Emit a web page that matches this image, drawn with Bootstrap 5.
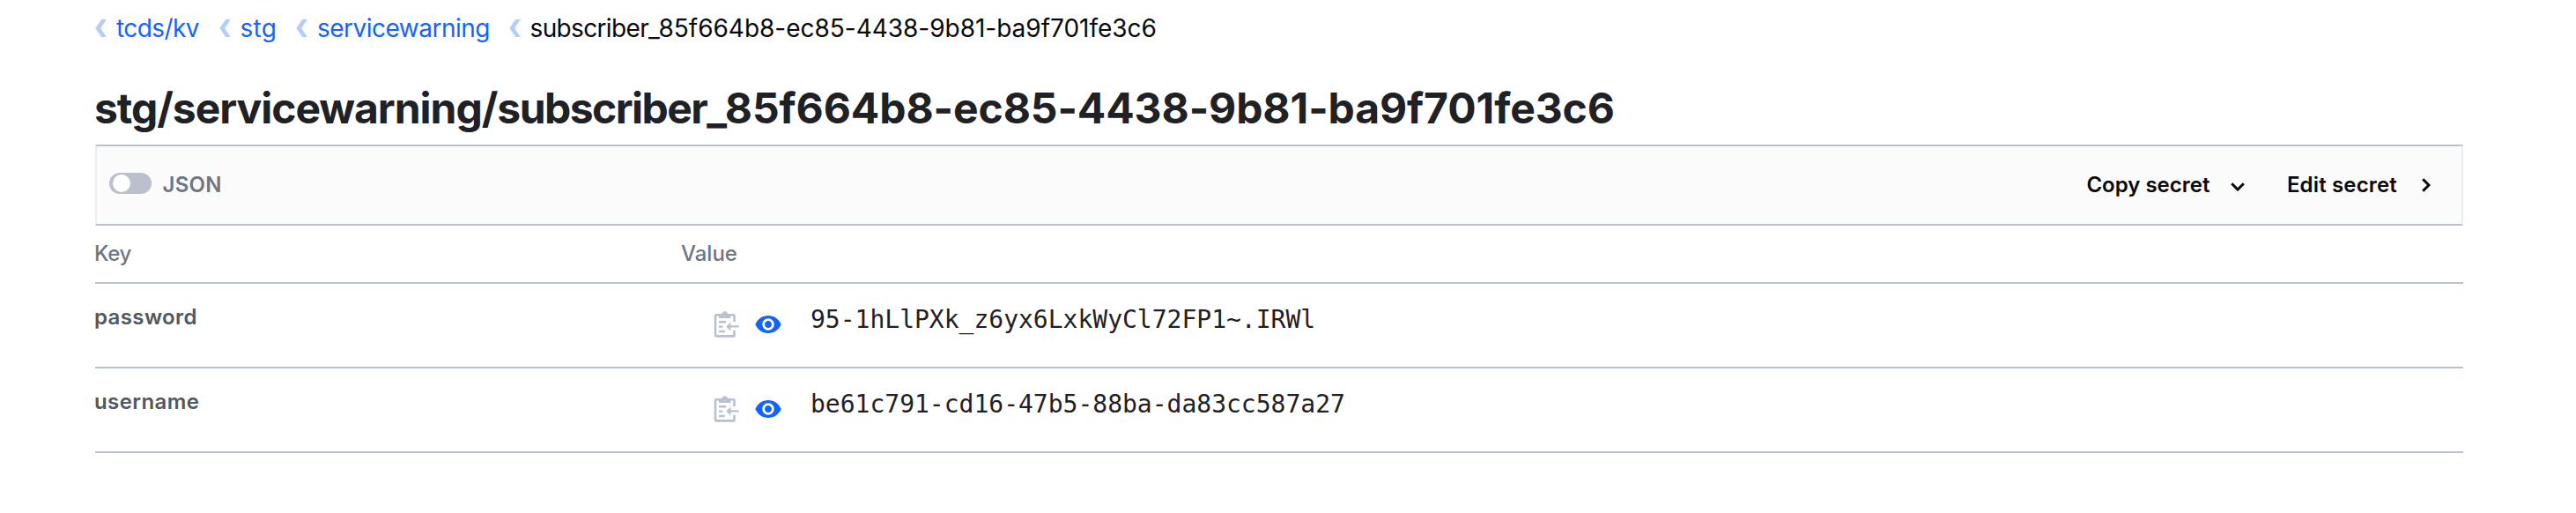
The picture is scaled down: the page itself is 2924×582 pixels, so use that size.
<!DOCTYPE html>
<html lang="en">
<head>
<meta charset="utf-8">
<title>stg/servicewarning secret</title>
<link rel="stylesheet" href="https://cdn.jsdelivr.net/npm/bootstrap@5.3.0/dist/css/bootstrap.min.css">
<style>
body{font-family:Inter,"Liberation Sans",sans-serif;background:#fff;color:#1f2124}
.page{padding:14px 128px 0 107px}
.crumbs{font-size:28px;line-height:36px;height:36px;color:#0a0a0a}
.crumbs a{color:#1563ff;text-decoration:none}
.crumbs svg{margin-right:11px;margin-left:1px;margin-top:-1px}
.crumbs li{display:flex;align-items:center;white-space:nowrap}
.c1{width:140.500px;letter-spacing:-.6px}
.c2{width:87.5px;letter-spacing:.3px}
.c3{width:241.5px;letter-spacing:-.51px}
.c4 .name{letter-spacing:-.65px}
.c4 .ident{letter-spacing:-.02px}
h1{font-size:48px;font-weight:700;line-height:60px;margin:43px 0 11px 0;color:#1f2124;white-space:nowrap}
h1 .dir{letter-spacing:-1.030px}
h1 .name{letter-spacing:-1.560px}
h1 .ident{letter-spacing:-.07px}
.toolbar{margin-left:1px;height:92px;background:#fbfbfb;border:2px solid #bac1cc;border-left-color:#ebeff4;border-right-color:#ebeff4;font-size:24px;line-height:36px}
.toggle{width:48px;height:24px;border-radius:12px;background:#bac1cc;padding:2px 4px;margin:-4px 12.500px 0 14px}
.toggle span{display:block;width:20px;height:20px;border-radius:50%;background:#fff}
.lbl{color:#6f7682;font-weight:600;letter-spacing:.3px}
.act{color:#0a0a0a;font-weight:600}
.line{margin-left:1px;border-bottom:2px solid #bac1cc}
.head{height:66px;font-size:24px;font-weight:500;color:#6f7682}
.keycol{width:665px;flex:none;font-size:24px;line-height:36px}
.keycol span{margin-left:-1px}
.item{height:96px}
.item .keycol{font-weight:600;color:#525761;padding-top:20px}
.val{font-family:"DejaVu Sans Mono",monospace;font-size:28px;line-height:40px;margin:21px 0 0 32px;color:#1f2124}
</style>
</head>
<body>
<svg width="0" height="0" class="position-absolute">
<symbol id="back" viewBox="0 0 13 20"><path d="M7.200 0h5.600L6.100 10l6.700 10H7.200L.4 10z" fill="#b3cdff"/></symbol>
<symbol id="clip" viewBox="0 0 32 32"><g fill="none" stroke="#bac1cc" stroke-width="2.6"><path d="M25.5 13V6.5Q25.5 5.3 24.3 5.3H5.2Q4 5.3 4 6.5V28.2Q4 29.4 5.2 29.4H24.3Q25.5 29.4 25.5 28.2V23"/><path d="M8 13.2h8M8 18.6h4.5M8 24h6.7M19.5 18.4h11.2" stroke-width="2.4"/></g><path d="M16.3 18.4l5.2-5v10z" fill="#bac1cc"/><path fill-rule="evenodd" d="M8 4.5h3.2C11.6 2.600 12.800 1.300 14.700 1.300S17.800 2.600 18.200 4.500H21.300V9H8zM14.700 3.800a1.500 1.500 0 1 0 0 3 1.500 1.500 0 1 0 0-3z" fill="#bac1cc"/></symbol>
<symbol id="eye" viewBox="0 0 24 24"><path fill="#1563ff" d="M12 4.500C7 4.500 2.730 7.610 1 12c1.730 4.390 6 7.500 11 7.500s9.270-3.110 11-7.500c-1.730-4.390-6-7.500-11-7.500zM12 17c-2.760 0-5-2.240-5-5s2.240-5 5-5 5 2.240 5 5-2.240 5-5 5zm0-8c-1.660 0-3 1.340-3 3s1.340 3 3 3 3-1.340 3-3-1.340-3-3-3z"/></symbol>
</svg>
<main class="page">
<nav>
<ul class="crumbs list-unstyled d-flex m-0">
<li class="c1"><svg width="13" height="20"><use href="#back"/></svg><a href="#">tcds/kv</a></li>
<li class="c2"><svg width="13" height="20"><use href="#back"/></svg><a href="#">stg</a></li>
<li class="c3"><svg width="13" height="20"><use href="#back"/></svg><a href="#">servicewarning</a></li>
<li class="c4"><svg width="13" height="20"><use href="#back"/></svg><span><span class="name">subscriber</span><span class="ident">_85f664b8-ec85-4438-9b81-ba9f701fe3c6</span></span></li>
</ul>
</nav>
<h1><span class="dir">stg/servicewarning/</span><span class="name">subscriber</span><span class="ident">_85f664b8-ec85-4438-9b81-ba9f701fe3c6</span></h1>
<div class="toolbar d-flex align-items-center">
<div class="toggle"><span></span></div><span class="lbl">JSON</span>
<span class="act ms-auto">Copy secret</span>
<svg width="16" height="10" class="ms-4" style="margin-top:4px"><path d="M1.200 1.200L8 8l6.800-6.800" fill="none" stroke="#0a0a0a" stroke-width="3"/></svg>
<span class="act" style="margin-left:47.500px;letter-spacing:.16px">Edit secret</span>
<svg width="10" height="16" style="margin:0 35px 0 28px"><path d="M1.200 1.200L8 8l-6.800 6.800" fill="none" stroke="#0a0a0a" stroke-width="3"/></svg>
</div>
<div class="line head d-flex align-items-center"><div class="keycol" style="letter-spacing:-.3px"><span>Key</span></div><div>Value</div></div>
<div class="line item d-flex align-items-start">
<div class="keycol" style="letter-spacing:.39px"><span>password</span></div>
<svg width="32" height="32" style="margin:30px 16px 0 35px"><use href="#clip"/></svg>
<svg width="32" height="32" style="margin-top:30px"><use href="#eye"/></svg>
<span class="val">95-1hLlPXk_z6yx6LxkWyCl72FP1~.IRWl</span>
</div>
<div class="line item d-flex align-items-start">
<div class="keycol" style="letter-spacing:.42px"><span>username</span></div>
<svg width="32" height="32" style="margin:30px 16px 0 35px"><use href="#clip"/></svg>
<svg width="32" height="32" style="margin-top:30px"><use href="#eye"/></svg>
<span class="val">be61c791-cd16-47b5-88ba-da83cc587a27</span>
</div>
</main>
<script src="https://cdn.jsdelivr.net/npm/bootstrap@5.3.0/dist/js/bootstrap.bundle.min.js"></script>
</body>
</html>
